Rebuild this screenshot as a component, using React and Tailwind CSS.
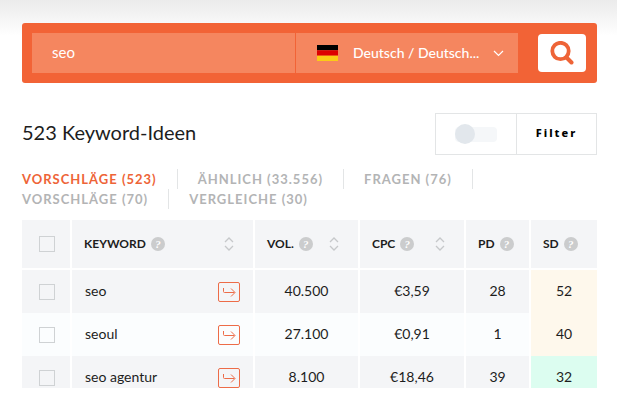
const TABS = [
  'VORSCHLÄGE (523)',
  'ÄHNLICH (33.556)',
  'FRAGEN (76)',
  'VORSCHLÄGE (70)',
  'VERGLEICHE (30)',
]

const ROWS = [
  { keyword: 'seo', vol: '40.500', cpc: '€3,59', pd: 28, sd: 52 },
  { keyword: 'seoul', vol: '27.100', cpc: '€0,91', pd: 1, sd: 40 },
  { keyword: 'seo agentur', vol: '8.100', cpc: '€18,46', pd: 39, sd: 32 },
]

function SearchIcon() {
  return (
    <svg viewBox="0 0 24 24" className="size-6" fill="none" stroke="#ee6437" aria-hidden="true">
      <circle cx="10.5" cy="10" r="8.2" strokeWidth="3.800" />
      <path d="M16.500 16.500l5 5" strokeWidth="4" strokeLinecap="round" />
    </svg>
  )
}

function SortIcon() {
  return (
    <svg viewBox="0 0 10 14" className="h-3.5 w-2.5" fill="none" stroke="#c6c8ca" strokeWidth="1.3" aria-hidden="true">
      <path d="M1 5l4-4 4 4M1 9l4 4 4-4" />
    </svg>
  )
}

function Help() {
  return (
    <span className="flex size-3.5 shrink-0 items-center justify-center rounded-full bg-[#cbcccd] font-['Liberation_Serif',serif] text-[11px] leading-none font-bold text-white italic">
      ?
    </span>
  )
}

function GermanFlag() {
  return (
    <svg viewBox="0 0 21 16" className="h-4 w-[21px] shrink-0" aria-hidden="true">
      <path fill="#000" d="M0 0h21v5.3H0z" />
      <path fill="#dd0000" d="M0 5.3h21v5.4H0z" />
      <path fill="#fbcb16" d="M0 10.7h21V16H0z" />
    </svg>
  )
}

function SearchBar() {
  return (
    <form className="flex items-center rounded-[3px] bg-[#f26336] p-2.5 pr-[11px]">
      <input
        aria-label="Keyword"
        defaultValue="seo"
        className="h-10 min-w-0 flex-1 bg-[#f5865f] px-5 pb-0.5 text-[15px] text-white outline-none"
      />
      <div className="ml-px flex h-10 w-[222px] items-center bg-[#f5865f] pr-3.5 pl-[21px] text-white">
        <GermanFlag />
        <select
          aria-label="Sprache"
          className="ml-[15px] min-w-0 flex-1 appearance-none bg-transparent pb-0.5 text-[14px] font-medium outline-none"
        >
          <option>Deutsch / Deutsch...</option>
        </select>
        <svg viewBox="0 0 11 7" className="h-[7px] w-[11px] shrink-0" fill="none" stroke="currentColor" strokeWidth="1.2" aria-hidden="true">
          <path d="M1 1l4.500 4.500L10 1" />
        </svg>
      </div>
      <button
        type="button"
        aria-label="Suchen"
        className="ml-5 flex h-[38px] w-12 items-center justify-center rounded-[4px] bg-white"
      >
        <SearchIcon />
      </button>
    </form>
  )
}

function Toggle() {
  return (
    <label className="flex w-20 items-center justify-center">
      <input type="checkbox" aria-label="Filter aktiv" className="peer sr-only" />
      <span className="flex h-[15px] w-[42px] items-center rounded-[4px] bg-[#f5f7f9]">
        <span className="size-5 shrink-0 rounded-full bg-[#e2e7ec]" />
      </span>
    </label>
  )
}

function Check({ label }) {
  return (
    <input
      type="checkbox"
      aria-label={label}
      className="block size-4 appearance-none border border-[#cfd2d4] bg-transparent"
    />
  )
}

function Th({ children, sortable }) {
  return (
    <th className="border-r-2 border-b-2 border-white p-0 pr-[19px] pl-3 text-left last:border-r-0">
      <div className="flex items-center gap-[5px]">
        {children}
        <Help />
        {sortable && (
          <button type="button" aria-label={`${children} sortieren`} className="ml-auto">
            <SortIcon />
          </button>
        )}
      </div>
    </th>
  )
}

function KeywordRow({ row }) {
  const sdTone = row.sd < 35 ? 'bg-[#dcfdf0]' : 'bg-[#fef8ec]'
  return (
    <tr className="h-[43px] bg-[#f4f5f7] text-center text-[14px] even:bg-[#fbfdfe]">
      <td className="border-r-2 border-white p-0 pl-[17px]">
        <Check label={row.keyword} />
      </td>
      <td className="border-r-2 border-white p-0 pr-[13px] pl-[13px]">
        <div className="flex items-center justify-between">
          <span className="pb-0.5">{row.keyword}</span>
          <button
            type="button"
            aria-label={`${row.keyword} öffnen`}
            className="flex h-5 w-[22px] items-center justify-center rounded-[2px] border border-[#ed6c48]"
          >
            <svg viewBox="0 0 14 12" className="h-3 w-3.5" fill="none" stroke="#ed6c48" aria-hidden="true">
              <path d="M1.500 2v3.500q0 1 1 1H12.500M9 2.500l4 4-4 4" />
            </svg>
          </button>
        </div>
      </td>
      <td className="border-r-2 border-white p-0 pb-0.5">{row.vol}</td>
      <td className="border-r-2 border-white p-0 pb-0.5">{row.cpc}</td>
      <td className="border-r-2 border-white p-0 pb-0.5">{row.pd}</td>
      <td className={`p-0 pb-0.5 ${sdTone}`}>{row.sd}</td>
    </tr>
  )
}

function KeywordTable() {
  return (
    <div className="mt-[11px] max-h-[168px] overflow-hidden">
      <table className="w-full table-fixed border-separate border-spacing-0">
        <colgroup>
          <col className="w-[50px]" />
          <col />
          <col className="w-[105px]" />
          <col className="w-[106px]" />
          <col className="w-[65px]" />
          <col className="w-[66px]" />
        </colgroup>
        <thead>
          <tr className="h-[50px] bg-[#f4f5f7] text-[12px] font-black">
            <th className="border-r-2 border-b-2 border-white p-0 pl-[17px]">
              <Check label="Alle auswählen" />
            </th>
            <Th sortable>KEYWORD</Th>
            <Th sortable>VOL.</Th>
            <Th sortable>CPC</Th>
            <Th>PD</Th>
            <Th>SD</Th>
          </tr>
        </thead>
        <tbody>
          {ROWS.map((row) => (
            <KeywordRow key={row.keyword} row={row} />
          ))}
        </tbody>
      </table>
    </div>
  )
}

export default function App() {
  return (
    <main className="min-h-screen bg-white bg-linear-to-b from-[#ebebeb] to-white to-[36px] px-5 pt-[23px] pl-[22px] font-['Lato',sans-serif] text-[#1d1d1d]">
      <SearchBar />

      <div className="mt-[30px] flex items-start justify-between">
        <h1 className="text-[20px] leading-[38px]">523 Keyword-Ideen</h1>
        <div className="flex h-[42px] border border-[#e3e5e6] bg-white">
          <Toggle />
          <button
            type="button"
            className="w-20 border-l border-[#e3e5e6] pb-0.5 font-['Noto_Sans',sans-serif] text-[11px] font-extrabold tracking-[2px] text-black"
          >
            Filter
          </button>
        </div>
      </div>

      <nav className="mt-3.5 flex flex-wrap gap-x-5 text-[13px] leading-5 font-bold tracking-[1px]">
        {TABS.map((tab, i) => (
          <a
            key={tab}
            href="#"
            className={`border-[#e3e5e6] pr-5 not-last:border-r ${i === 0 ? 'text-[#ee6437]' : 'text-[#b3b4b5]'}`}
          >
            {tab}
          </a>
        ))}
      </nav>

      <KeywordTable />
    </main>
  )
}
